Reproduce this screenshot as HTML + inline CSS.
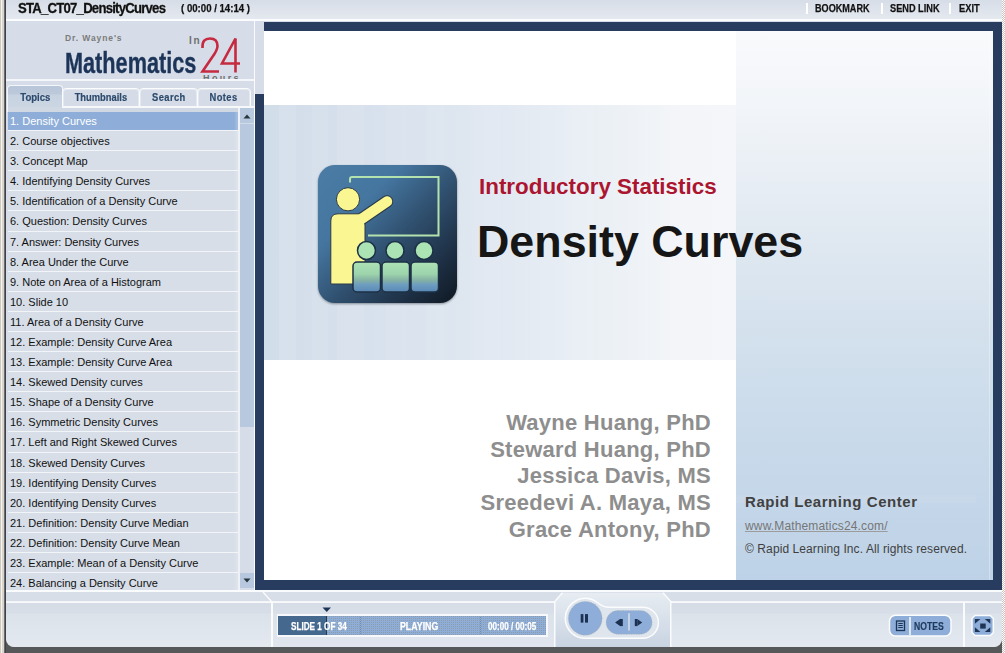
<!DOCTYPE html>
<html><head><meta charset="utf-8">
<style>
*{margin:0;padding:0;box-sizing:border-box}
html,body{width:1005px;height:653px;overflow:hidden}
body{position:relative;font-family:"Liberation Sans",sans-serif;
background-color:#ffffff;
background-image:conic-gradient(#c9c5bd 25%,#fff 0 50%,#c9c5bd 0 75%,#fff 0);
background-size:2px 2px}
.a{position:absolute}
.nw{white-space:nowrap}
.sx{transform-origin:0 0;display:inline-block}
.row{left:8px;width:230px;border-top:1px solid #f2f5f8;background:linear-gradient(90deg,#d7dee8 0,#d7dee8 225px,#dee4ec 230px);font-size:11px;color:#111;white-space:nowrap;overflow:hidden}
.row span{position:absolute;left:2px;top:4px;line-height:13px}
.row.sel{top:112px!important;height:18px!important;border-top:0;background:linear-gradient(90deg,#8eaed9 0,#8eaed9 226px,#a3bde0 229px,#a3bde0 230px);color:#fff}
.row.sel span{top:3px}
.tab{-webkit-text-stroke:0.2px #2c4a6c;border:1px solid #fbfcfd;box-shadow:inset 0 0 0 1px rgba(240,244,248,0.55);border-radius:4px 4px 0 0;background:#d5dce7;font-weight:bold;font-size:11px;color:#2c4a6c;text-align:center;line-height:14px;white-space:nowrap}
.tab span{display:inline-block;transform-origin:50% 50%}

</style></head><body>

<!-- left frame stripes -->
<div class="a" style="left:0;top:0;width:1px;height:653px;background:#cdc9c1"></div>
<div class="a" style="left:1px;top:0;width:1px;height:653px;background:#f6f4f0"></div>
<div class="a" style="left:2px;top:0;width:2px;height:653px;background:#d9d5cd"></div>
<div class="a" style="left:4px;top:0;width:1px;height:653px;background:#6a6e72"></div>
<div class="a" style="left:5px;top:0;width:1px;height:653px;background:#3e4246"></div>

<!-- app background -->
<div class="a" style="left:6px;top:620px;width:996px;height:33px;background:#565759"></div>
<div class="a" style="left:6px;top:0;width:996px;height:647px;background:#d6dde8;border-bottom-left-radius:9px;border-bottom-right-radius:9px"></div>

<!-- top bar -->
<div class="a" style="left:6px;top:0;width:996px;height:19px;background:linear-gradient(#d7dde7,#e4e9f0)"></div>
<div class="a" style="left:6px;top:19px;width:996px;height:2px;background:#fbfcfd"></div>
<div class="a nw" style="left:18px;top:0px;font-weight:bold;font-size:14.6px;line-height:17px;letter-spacing:-0.85px;color:#111;-webkit-text-stroke:0.3px #111"><span class="sx" style="transform:scaleX(0.9)">STA_CT07_DensityCurves</span></div>
<div class="a nw" style="left:181px;top:2px;font-weight:bold;font-size:11px;line-height:13px;color:#111;-webkit-text-stroke:0.25px #111"><span class="sx" style="transform:scaleX(0.875)">( 00:00 / 14:14 )</span></div>
<div class="a" style="left:806px;top:3px;width:2px;height:11px;background:#fff"></div>
<div class="a nw" style="left:815px;top:2px;font-weight:bold;font-size:11.5px;line-height:13px;color:#111;-webkit-text-stroke:0.25px #111"><span class="sx" style="transform:scaleX(0.79)">BOOKMARK</span></div>
<div class="a" style="left:881px;top:3px;width:2px;height:11px;background:#fff"></div>
<div class="a nw" style="left:890px;top:2px;font-weight:bold;font-size:11.5px;line-height:13px;color:#111;-webkit-text-stroke:0.25px #111"><span class="sx" style="transform:scaleX(0.80)">SEND LINK</span></div>
<div class="a" style="left:949px;top:3px;width:2px;height:11px;background:#fff"></div>
<div class="a nw" style="left:959px;top:2px;font-weight:bold;font-size:11.5px;line-height:13px;color:#111;-webkit-text-stroke:0.25px #111"><span class="sx" style="transform:scaleX(0.81)">EXIT</span></div>

<!-- LOGO -->
<div id="logo">
<div class="a nw" style="left:65px;top:33px;font-weight:bold;font-size:8.5px;line-height:10px;letter-spacing:0.9px;color:#7b7b7b">Dr. Wayne's</div>
<div class="a nw" style="left:65px;top:47px;font-weight:bold;font-size:29.5px;line-height:32px;color:#1c3458;-webkit-text-stroke:0.35px #1c3458"><span class="sx" style="transform:scaleX(0.735)">Mathematics</span></div>
<div class="a nw" style="left:189px;top:36px;font-weight:bold;font-size:10px;line-height:10px;letter-spacing:1.6px;color:#707070">In</div>
<div class="a nw" style="left:203px;top:73px;font-weight:bold;font-size:9px;line-height:10px;letter-spacing:2.4px;color:#6e6e6e">Hours</div>
<svg class="a" style="left:195px;top:32px" width="50" height="45" viewBox="0 0 50 45">
<g fill="none" stroke="#c62a40" stroke-width="2.6" stroke-linecap="butt" stroke-linejoin="miter">
<path d="M7.5 16 C7 9 10 6.5 15 6.5 C20 6.5 22.5 9.5 22.5 14 C22.5 18 20 21.5 17 25.5 L7.5 39.5 L24 39.5"/>
<path d="M40.5 40.5 L40.5 6.5 L27 31.5 L45 31.5"/>
</g></svg>
</div>
<div class="a" style="left:6px;top:79px;width:248px;height:2px;background:#f4f6f9"></div>

<!-- TABS -->
<div id="tabs">
<div class="a" style="left:7px;top:85px;width:56px;height:27px;border:1px solid #f4f6f9;border-bottom:0;border-radius:4px 4px 0 0;background:linear-gradient(#b8c6d9 0,#bcc9db 8px,#c8d3e1 9px,#ccd6e3 100%)"></div>
<div class="a" style="left:8px;top:107px;width:246px;height:5px;background:#d0d8e4"></div>
<div class="a nw" style="left:7px;top:91px;width:56px;text-align:center;font-weight:bold;font-size:11px;line-height:13px;color:#2c4a6c;-webkit-text-stroke:0.2px #2c4a6c"><span style="display:inline-block;transform:scaleX(0.87)">Topics</span></div>
<div class="a tab" style="left:62px;top:88px;width:78px;height:20px;line-height:16px"><span style="transform:scaleX(0.85)">Thumbnails</span></div>
<div class="a tab" style="left:139px;top:88px;width:59px;height:20px;line-height:16px"><span style="transform:scaleX(0.85);letter-spacing:0.5px">Search</span></div>
<div class="a tab" style="left:197px;top:88px;width:54px;height:20px;line-height:16px"><span style="transform:scaleX(0.85);letter-spacing:0.5px">Notes</span></div>
</div>

<!-- LIST -->
<div id="list">
<div class="a row sel" style="top:110px;height:20px"><span>1. Density Curves</span></div>
<div class="a row" style="top:130px;height:20px"><span>2. Course objectives</span></div>
<div class="a row" style="top:150px;height:20px"><span>3. Concept Map</span></div>
<div class="a row" style="top:170px;height:20px"><span>4. Identifying Density Curves</span></div>
<div class="a row" style="top:190px;height:20px"><span>5. Identification of a Density Curve</span></div>
<div class="a row" style="top:210px;height:21px"><span>6. Question: Density Curves</span></div>
<div class="a row" style="top:231px;height:20px"><span>7. Answer: Density Curves</span></div>
<div class="a row" style="top:251px;height:20px"><span>8. Area Under the Curve</span></div>
<div class="a row" style="top:271px;height:20px"><span>9. Note on Area of a Histogram</span></div>
<div class="a row" style="top:291px;height:20px"><span>10. Slide 10</span></div>
<div class="a row" style="top:311px;height:20px"><span>11. Area of a Density Curve</span></div>
<div class="a row" style="top:331px;height:20px"><span>12. Example: Density Curve Area</span></div>
<div class="a row" style="top:351px;height:20px"><span>13. Example: Density Curve Area</span></div>
<div class="a row" style="top:371px;height:20px"><span>14. Skewed Density curves</span></div>
<div class="a row" style="top:391px;height:20px"><span>15. Shape of a Density Curve</span></div>
<div class="a row" style="top:411px;height:20px"><span>16. Symmetric Density Curves</span></div>
<div class="a row" style="top:431px;height:21px"><span>17. Left and Right Skewed Curves</span></div>
<div class="a row" style="top:452px;height:20px"><span>18. Skewed Density Curves</span></div>
<div class="a row" style="top:472px;height:20px"><span>19. Identifying Density Curves</span></div>
<div class="a row" style="top:492px;height:20px"><span>20. Identifying Density Curves</span></div>
<div class="a row" style="top:512px;height:20px"><span>21. Definition: Density Curve Median</span></div>
<div class="a row" style="top:532px;height:20px"><span>22. Definition: Density Curve Mean</span></div>
<div class="a row" style="top:552px;height:20px"><span>23. Example: Mean of a Density Curve</span></div>
<div class="a row" style="top:572px;height:20px"><span>24. Balancing a Density Curve</span></div>
</div>

<!-- scrollbar -->
<div class="a" style="left:238px;top:108px;width:2px;height:482px;background:#eef2f6"></div>
<div class="a" style="left:62px;top:106px;width:192px;height:2px;background:#f6f8fa"></div>
<div class="a" style="left:240px;top:108px;width:14px;height:482px;background:#d6dde8"></div>
<div class="a" style="left:240px;top:108px;width:14px;height:15px;background:#b8c8df"></div>
<div class="a" style="left:240px;top:123px;width:14px;height:1px;background:#d2dbe7"></div>
<div class="a" style="left:240px;top:124px;width:14px;height:303px;background:#b8c8df"></div>
<div class="a" style="left:240px;top:573px;width:14px;height:15px;background:#b8c8df"></div>
<svg class="a" style="left:240px;top:108px" width="14" height="15"><path d="M3.5 10.5 L7 6.5 L10.5 10.5 Z" fill="#27373e"/></svg>
<svg class="a" style="left:240px;top:573px" width="14" height="15"><path d="M3.5 5.5 L7 9.5 L10.5 5.5 Z" fill="#27373e"/></svg>
<!-- separator between panel and slide -->
<div class="a" style="left:254px;top:21px;width:1px;height:569px;background:#fafbfc"></div>

<!-- slide frame -->
<div class="a" style="left:264px;top:22px;width:738px;height:568px;background:#283c5f"></div>
<div class="a" style="left:255px;top:94px;width:10px;height:496px;background:#283c5f"></div>

<!-- SLIDE -->
<div id="slide" class="a" style="left:264px;top:31px;width:729px;height:549px;background:#fff;overflow:hidden">
<div class="a" style="left:0;top:74px;width:472px;height:255px;background:linear-gradient(90deg,#d2ddea 0,#d6e0ec 90px,#dee6f0 200px,#e7edf4 300px,#eef2f6 370px,#f3f5f8 410px,#f4f6f9 472px)"></div>
<div class="a" style="left:0;top:74px;width:472px;height:255px;background:linear-gradient(90deg,rgba(255,255,255,0) 0 15px,rgba(255,255,255,.09) 15px 32px,rgba(255,255,255,0) 32px 48px,rgba(255,255,255,.06) 48px 64px,rgba(255,255,255,0) 64px 73px,rgba(255,255,255,.07) 73px 100px,rgba(255,255,255,0) 100px 122px,rgba(255,255,255,.05) 122px 143px,rgba(255,255,255,0) 143px 163px,rgba(255,255,255,.06) 163px 180px,rgba(255,255,255,0) 180px 208px,rgba(255,255,255,.06) 208px 236px,rgba(255,255,255,0) 236px 300px,rgba(255,255,255,.05) 300px 330px,rgba(255,255,255,0) 330px)"></div>

<div class="a" style="left:472px;top:0;width:257px;height:549px;background:linear-gradient(#f9fafc 0,#f2f5f9 74px,#e5ecf3 169px,#d4e1ed 299px,#c8d9ea 419px,#bed2e7 549px)"></div>
<div class="a" style="left:725px;top:0;width:1px;height:549px;background:rgba(255,255,255,0.3)"></div>
<div class="a" style="left:472px;top:464px;width:240px;height:8px;background:rgba(255,255,255,0.07)"></div>

<svg class="a" style="left:54px;top:134px;filter:drop-shadow(0 1.5px 1px rgba(20,30,40,.45))" width="139" height="138" viewBox="0 0 139 138" overflow="visible">
<defs>
<linearGradient id="ib" x1="0" y1="0" x2="1" y2="1">
<stop offset="0" stop-color="#4a7ca6"/><stop offset="0.3" stop-color="#4576a0"/><stop offset="0.55" stop-color="#30506f"/><stop offset="0.8" stop-color="#1d2f44"/><stop offset="1" stop-color="#0f1822"/>
</linearGradient>
<linearGradient id="sb" x1="0" y1="0" x2="0" y2="1">
<stop offset="0" stop-color="#ace2b4"/><stop offset="0.4" stop-color="#9dd4ac"/><stop offset="0.62" stop-color="#83b0a6"/><stop offset="0.75" stop-color="#6e9ec0"/><stop offset="1" stop-color="#5a88b6"/>
</linearGradient>
</defs>
<rect x="0" y="0" width="139" height="138" rx="17" fill="url(#ib)"/>
<path d="M32 17.5 L32 14 Q32 12 34 12 L120.5 12 L120.5 70.5 L50 70.5" fill="none" stroke="#b3e2ae" stroke-width="2"/>
<g stroke="#2a3a48" stroke-width="1">
<circle cx="30" cy="34.3" r="11.6" fill="#faf692"/>
</g>
<path d="M42 55 L69 36.5" stroke="#2a3a48" stroke-width="12.5" stroke-linecap="round"/>
<path d="M12.8 119 L12.8 56 Q12.8 48.8 20 48.8 L44 48.8 L47 60 L47 119 Z" fill="#faf692" stroke="#2a3a48" stroke-width="1"/>
<path d="M42 55 L69 36.5" stroke="#faf692" stroke-width="10.5" stroke-linecap="round"/>
<g stroke="#1c3045" stroke-width="1.5">
<circle cx="48.5" cy="85.5" r="9" fill="#abe3b4"/>
<circle cx="77" cy="85.5" r="9" fill="#abe3b4"/>
<circle cx="106" cy="85.5" r="9" fill="#abe3b4"/>
<rect x="35" y="97" width="27.5" height="30" rx="4" fill="url(#sb)"/>
<rect x="64" y="97" width="27.5" height="30" rx="4" fill="url(#sb)"/>
<rect x="93" y="97" width="27.5" height="30" rx="4" fill="url(#sb)"/>
</g>
</svg>

<div class="a nw" style="left:215px;top:145px;font-weight:bold;font-size:22.4px;line-height:22px;color:#ac1530">Introductory Statistics</div>
<div class="a nw" style="left:213px;top:188px;font-weight:bold;font-size:44.8px;line-height:44px;color:#161616">Density Curves</div>
<div class="a nw" style="left:146px;top:379px;width:301px;text-align:right;font-weight:bold;font-size:22px;line-height:26.7px;letter-spacing:0.25px;color:#8e8e8e">Wayne Huang, PhD<br>Steward Huang, PhD<br>Jessica Davis, MS<br>Sreedevi A. Maya, MS<br>Grace Antony, PhD</div>
<div class="a nw" style="left:481px;top:463px;font-weight:bold;font-size:15px;line-height:15px;letter-spacing:0.56px;color:#414141">Rapid Learning Center</div>
<div class="a nw" style="left:481px;top:489px;font-size:12px;line-height:12px;letter-spacing:0.15px;color:#767676;text-decoration:underline;text-decoration-color:#9c9c9c">www.Mathematics24.com/</div>
<div class="a nw" style="left:481px;top:512px;font-size:12px;line-height:12px;letter-spacing:0.09px;color:#3f3f3f">© Rapid Learning Inc. All rights reserved.</div>
</div>

<!-- BOTTOM -->
<div id="bottom">
<div class="a" style="left:6px;top:590px;width:996px;height:2px;background:#fafbfc"></div>
<div class="a" style="left:6px;top:592px;width:996px;height:9px;background:#d7dee8"></div>
<div class="a" style="left:6px;top:601px;width:996px;height:2px;background:linear-gradient(#f0f3f7,#fbfcfd)"></div>
<div class="a" style="left:6px;top:603px;width:996px;height:44px;background:linear-gradient(#d5dce6 0,#d7dee8 10px,#dbe2ea 11px,#e4e9f0 100%);border-radius:0 0 8px 8px"></div>
<div class="a" style="left:273px;top:603px;width:281px;height:44px;background:linear-gradient(#d6dde7 0,#d8dfe9 10px,#dbe2ea 11px,#e1e6ee 100%)"></div>
<div class="a" style="left:271px;top:601px;width:2px;height:46px;background:#fafbfc"></div>
<div class="a" style="left:963px;top:602px;width:2px;height:45px;background:#fafbfc"></div>

<!-- progress bar -->
<div class="a" style="left:277px;top:614px;width:271px;height:23px;background:#f6f8fb"></div>
<div class="a" style="left:278px;top:616px;width:268px;height:19px;background:conic-gradient(#8d9bab 25%,#8daed9 0) 0 0/2px 2px"></div>
<div class="a" style="left:278px;top:616px;width:49px;height:19px;background:#45688f"></div>
<div class="a" style="left:326px;top:616px;width:1px;height:19px;background:#243a5a"></div>
<div class="a" style="left:360px;top:617px;width:1px;height:17px;background:repeating-linear-gradient(#6f8bb5 0 1px,transparent 1px 2px)"></div>
<div class="a" style="left:480px;top:617px;width:1px;height:17px;background:repeating-linear-gradient(#6f8bb5 0 1px,transparent 1px 2px)"></div>
<svg class="a" style="left:322px;top:607px" width="10" height="6"><path d="M0.5 0.5 L9 0.5 L4.75 5 Z" fill="#1f3556"/></svg>
<div class="a nw" style="left:291px;top:620px;font-weight:bold;font-size:10.6px;line-height:13px;color:#fff;-webkit-text-stroke:0.25px #fff"><span class="sx" style="transform:scaleX(0.77)">SLIDE 1 OF 34</span></div>
<div class="a nw" style="left:400px;top:620px;font-weight:bold;font-size:10.6px;line-height:13px;color:#fff;-webkit-text-stroke:0.25px #fff"><span class="sx" style="transform:scaleX(0.83)">PLAYING</span></div>
<div class="a nw" style="left:488px;top:620px;font-weight:bold;font-size:10.6px;line-height:13px;color:#fff;-webkit-text-stroke:0.25px #fff"><span class="sx" style="transform:scaleX(0.765)">00:00 / 00:05</span></div>

<!-- controls tab & buttons -->
<svg class="a" style="left:0;top:585px" width="1005" height="68" viewBox="0 585 1005 68">
<defs>
<linearGradient id="tg" x1="0" y1="0" x2="0" y2="1"><stop offset="0" stop-color="#e7ecf2"/><stop offset="1" stop-color="#c9d4e2"/></linearGradient>
</defs>
<line x1="263" y1="592" x2="271.5" y2="601.5" stroke="#fafbfc" stroke-width="1.3"/>
<path d="M554.75 647 L554.75 601.5 L562.5 592.7 L663 592.7 L670.75 601.5 L670.75 647 Z" fill="url(#tg)"/>
<path d="M554.75 647 L554.75 601.5 L562.5 592.7 M663 592.7 L670.75 601.5 L670.75 647" fill="none" stroke="#fafbfc" stroke-width="1.5"/>
<path d="M565.25 618.3 A20 20 0 0 1 598.1 603 C601.5 606 604 607.3 609 607.3 L642.9 607.3 A15.5 15.5 0 0 1 642.9 638.3 L585.25 638.3 A20 20 0 0 1 565.25 618.3 Z" fill="#dfe5ed" stroke="#fbfcfd" stroke-width="1.5"/>
<circle cx="585.25" cy="618.35" r="16.9" fill="#8eaed9" stroke="#b0a890" stroke-width="0.5" stroke-dasharray="1 1.5"/>
<rect x="606.1" y="610.5" width="46" height="23.8" rx="11.9" fill="#8eaed9" stroke="#b0a890" stroke-width="0.5" stroke-dasharray="1 1.5"/>
<rect x="580.7" y="614.1" width="2.7" height="8.5" fill="#1c3050"/>
<rect x="585" y="614.1" width="3" height="8.5" fill="#1c3050"/>
<rect x="628" y="613.2" width="2" height="17.3" fill="#c5d5e6"/>
<path d="M615.1 622.5 L620 619 L620 626.1 Z" fill="#1c3050"/>
<rect x="620" y="619" width="2.8" height="7.1" fill="#1c3050"/>
<rect x="634.8" y="619" width="2.5" height="7.1" fill="#1c3050"/>
<path d="M637.3 619 L642.2 622.5 L637.3 626.1 Z" fill="#1c3050"/>

<!-- notes button -->
<rect x="889.5" y="615.3" width="61.5" height="20.8" rx="6" fill="#8eaed9" stroke="#fbfcfd" stroke-width="1.5"/>
<rect x="909" y="617" width="2" height="18" fill="#dfe8f2"/>
<rect x="896.5" y="621" width="8" height="9.5" fill="none" stroke="#1e3454" stroke-width="1.3"/>
<rect x="898.3" y="623" width="4.5" height="1" fill="#1e3454"/>
<rect x="898.3" y="625" width="4.5" height="1" fill="#1e3454"/>
<rect x="898.3" y="627" width="4.5" height="1" fill="#1e3454"/>

<!-- fullscreen button -->
<path d="M975 615.5 L990.3 615.5 L993.3 618.5 L993.3 632.5 L990.3 635.5 L975 635.5 L972 632.5 L972 618.5 Z" fill="#8eaed9" stroke="#fbfcfd" stroke-width="1.5"/>
<path d="M974.9 619 L980.4 619 L974.9 623.8 Z" fill="#1e3454"/>
<path d="M990.3 619 L984.8 619 L990.3 623.8 Z" fill="#1e3454"/>
<path d="M974.9 632 L980.4 632 L974.9 627.2 Z" fill="#1e3454"/>
<path d="M990.3 632 L984.8 632 L990.3 627.2 Z" fill="#1e3454"/>
<rect x="980.2" y="623.5" width="5.5" height="5.1" fill="#1e3454"/>
</svg>
<div class="a nw" style="left:914px;top:620px;font-weight:bold;font-size:10.8px;line-height:13px;color:#1e3a5c;-webkit-text-stroke:0.2px #1e3a5c"><span class="sx" style="transform:scaleX(0.8)">NOTES</span></div>
</div>



</body></html>
